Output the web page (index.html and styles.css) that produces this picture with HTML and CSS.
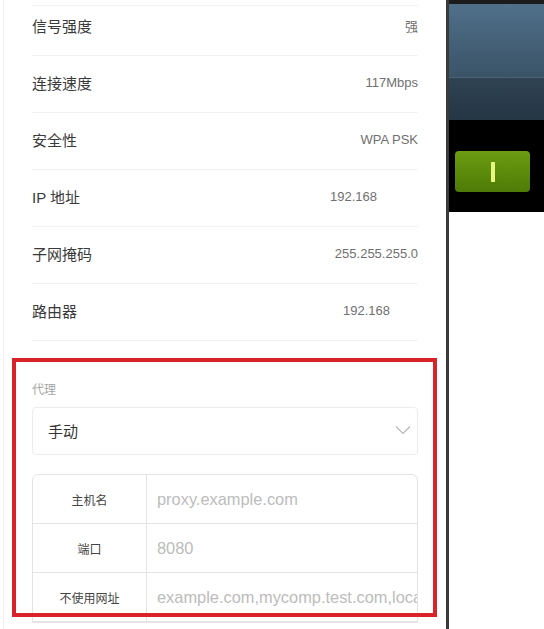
FILE: index.html
```html
<!DOCTYPE html>
<html>
    <head>
        <meta charset="utf-8">
        <title>WLAN details</title>

        <link rel="stylesheet" href="styles.css">
    </head>
    <body>

        <div class="screen">
            <div class="page">
                <!-- network info -->
                <ul class="info-list">
                    <li class="info-row"><span class="info-label">信号强度</span><span class="info-value">强</span></li>
                    <li class="info-row"><span class="info-label">连接速度</span><span class="info-value">117Mbps</span></li>
                    <li class="info-row"><span class="info-label">安全性</span><span class="info-value">WPA PSK</span></li>
                    <li class="info-row"><span class="info-label">IP 地址</span><span class="info-value info-value-ip">192.168</span></li>
                    <li class="info-row"><span class="info-label">子网掩码</span><span class="info-value">255.255.255.0</span></li>
                    <li class="info-row"><span class="info-label">路由器</span><span class="info-value info-value-router">192.168</span></li>
                </ul>

                <!-- proxy -->
                <section class="proxy">
                    <div class="proxy-title">代理</div>

                    <div class="select">
                        <span>手动</span>
                        <svg class="chevron" width="16" height="10" viewBox="0 0 16 10">
                            <polyline points="1,1.5 8,8.5 15,1.5" fill="none" stroke="#b8b8b8" stroke-width="1.2"/>
                        </svg>
                    </div>

                    <div class="proxy-table">
                        <div class="proxy-row">
                            <div class="proxy-label">主机名</div>
                            <div class="proxy-input">proxy.example.com</div>
                        </div>
                        <div class="proxy-row">
                            <div class="proxy-label">端口</div>
                            <div class="proxy-input">8080</div>
                        </div>
                        <div class="proxy-row">
                            <div class="proxy-label">不使用网址</div>
                            <div class="proxy-input">example.com,mycomp.test.com,localhost</div>
                        </div>
                    </div>
                </section>
            </div>

            <div class="divider"></div>

            <div class="side">
                <div class="side-top"></div>
                <div class="side-head"></div>
                <div class="side-sub"></div>
                <div class="side-dark">
                    <div class="toggle-btn"><span class="toggle-bar"></span></div>
                </div>
                <div class="side-rest"></div>
            </div>

            <!-- annotation frame -->
            <div class="highlight"></div>
        </div>

    </body>
</html>
```

FILE: styles.css
```css
/* Base */

body {
    margin: 0;
    background: #fff;
    font-family: "Liberation Sans", "Noto Sans CJK SC", sans-serif;
}

.screen {
    display: flex;
    position: relative;
    width: 544px;
    height: 629px;
    overflow: hidden;
}

/* Page */

.page {
    box-sizing: border-box;
    width: 443px;
    margin-left: 3px;
    padding: 0 28px;
    border-left: 1px solid #f1f1f1;
    background: #fff;
}

.info-list {
    list-style: none;
    margin: -1px 0 0 0;
    padding: 0;
}

.info-row {
    display: flex;
    justify-content: space-between;
    align-items: center;
    box-sizing: border-box;
    height: 57px;
    padding-bottom: 3px;
    border-bottom: 1px solid #f2f2f2;
}

.info-row:first-child {
    background: linear-gradient(#f2f2f2, #f2f2f2) no-repeat 0 6px / 100% 1px;
}

.info-label {
    font-size: 15px;
    color: #3a3a3a;
}

.info-value {
    font-size: 13px;
    color: #707070;
}

.info-value-ip {
    padding-right: 41px;
}

.info-value-router {
    padding-right: 28px;
}

/* Proxy */

.proxy {
    padding-top: 39px;
}

.proxy-title {
    font-size: 12px;
    line-height: 20px;
    color: #a5a5a5;
}

.select {
    display: flex;
    justify-content: space-between;
    align-items: center;
    box-sizing: border-box;
    height: 48px;
    margin-top: 7px;
    padding: 0 6px 2px 15px;
    border: 1px solid #ececec;
    border-radius: 4px;
    font-size: 15px;
    color: #333;
}

.proxy-table {
    margin-top: 19px;
    border: 1px solid #e4e4e4;
    border-radius: 6px 6px 0 0;
}

.proxy-row {
    display: flex;
    height: 48px;
    border-bottom: 1px solid #e4e4e4;
}

.proxy-label {
    display: flex;
    justify-content: center;
    align-items: center;
    flex: 0 0 113px;
    border-right: 1px solid #e4e4e4;
    font-size: 12px;
    color: #444;
}

.proxy-input {
    display: flex;
    align-items: center;
    flex: 1;
    min-width: 0;
    padding-left: 10px;
    overflow: hidden;
    white-space: nowrap;
    font-size: 16.4px;
    color: #bcbcbc;
}

/* Right side (other window) */

.divider {
    width: 3px;
    background: #3a3a3a;
}

.side {
    display: flex;
    flex-direction: column;
    flex: 1;
}

.side-top {
    height: 4px;
    background: #1c1c1c;
}

.side-head {
    height: 73px;
    background: linear-gradient(#50708a, #3a5367);
}

.side-sub {
    height: 42px;
    border-top: 1px solid #4b6275;
    background: linear-gradient(#2f4352, #253644);
}

.side-dark {
    height: 92px;
    background: #000;
}

.toggle-btn {
    display: flex;
    justify-content: center;
    align-items: center;
    width: 75px;
    height: 41px;
    margin: 31px 0 0 6px;
    border-radius: 4px;
    background: linear-gradient(#6c9c12, #4e7b06);
}

.toggle-bar {
    width: 4px;
    height: 20px;
    background: #e9f77f;
}

.side-rest {
    flex: 1;
    background: #fff;
}

/* Annotation frame */

.highlight {
    position: absolute;
    left: 12px;
    top: 358px;
    box-sizing: border-box;
    width: 425px;
    height: 259px;
    border: 4.5px solid #d8232a;
}
```
